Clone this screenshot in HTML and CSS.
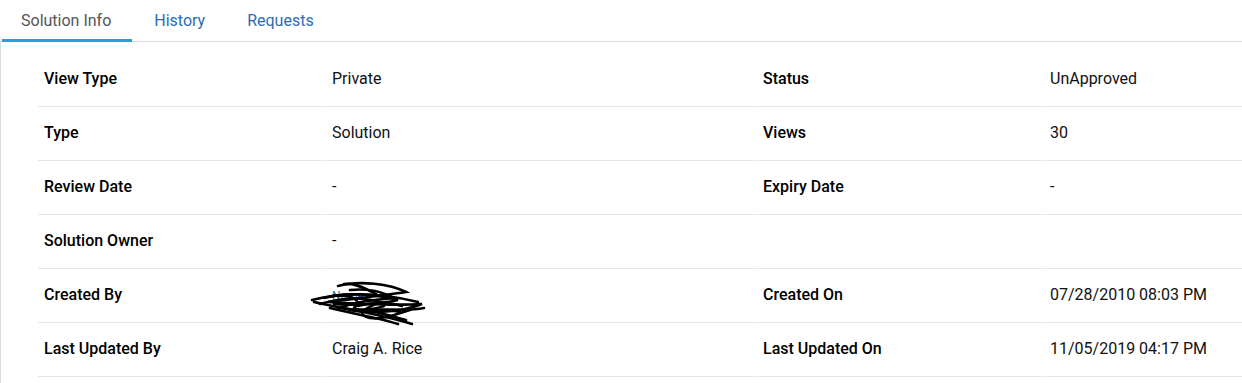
FILE: index.html
```
<!DOCTYPE html>
<html lang="en">
<head>
  <meta charset="UTF-8">
  <title>Solution Info</title>
  <link rel="stylesheet" href="styles.css">
</head>
<body>
  <!-- tabs -->
  <nav class="tabs">
    <a class="tab active">Solution Info</a>
    <a class="tab">History</a>
    <a class="tab">Requests</a>
  </nav>

  <!-- details -->
  <section class="panel">
    <table class="info">
      <colgroup>
        <col class="c1"><col class="c2"><col class="c3"><col class="c4">
      </colgroup>
      <tr>
        <th>View Type</th><td>Private</td>
        <th>Status</th><td>UnApproved</td>
      </tr>
      <tr>
        <th>Type</th><td>Solution</td>
        <th>Views</th><td>30</td>
      </tr>
      <tr>
        <th>Review Date</th><td>-</td>
        <th>Expiry Date</th><td>-</td>
      </tr>
      <tr>
        <th>Solution Owner</th><td>-</td>
        <th></th><td></td>
      </tr>
      <tr>
        <th>Created By</th>
        <td class="redacted">
          <span class="hidden-name">Name</span>
          <svg class="scribble" width="118" height="50" viewBox="0 0 118 50">
            <g fill="none" stroke="#000" stroke-width="2.6" stroke-linecap="round">
              <path d="M2 22 C25 16, 60 12, 108 24"/>
              <path d="M4 24 C30 30, 70 36, 102 46"/>
              <path d="M28 8 C50 2, 80 6, 96 14 C70 18, 40 21, 18 24 C50 26, 82 28, 112 26 C92 34, 62 36, 38 32 C58 30, 80 38, 96 42"/>
              <path d="M40 12 C60 10, 72 14, 84 20 C62 22, 44 24, 30 30 C52 34, 70 30, 90 34"/>
              <path d="M10 26 C30 20, 50 18, 70 24 C56 30, 44 36, 60 40 C74 42, 86 36, 100 32"/>
              <path d="M22 18 C40 16, 52 22, 46 28 C38 32, 56 34, 74 28"/>
              <path d="M34 6 C44 4, 58 12, 66 16 M48 28 C62 24, 80 24, 92 28"/>
              <path d="M14 20 C36 14, 64 16, 88 22 C70 26, 40 28, 24 26"/>
              <path d="M60 32 C76 30, 96 34, 114 30"/>
              <path d="M20 30 C44 36, 70 40, 88 46"/>
            </g>
          </svg>
        </td>
        <th>Created On</th><td>07/28/2010 08:03 PM</td>
      </tr>
      <tr>
        <th>Last Updated By</th><td>Craig A. Rice</td>
        <th>Last Updated On</th><td>11/05/2019 04:17 PM</td>
      </tr>
    </table>
  </section>
</body>
</html>
```
FILE: styles.css
```
body {
  margin: 0;
  font-family: Roboto, "Liberation Sans", sans-serif;
  font-size: 16px;
  color: #111;
  background: #fff;
  overflow: hidden;
}

/* ===== Tabs ===== */
.tabs {
  display: flex;
  height: 41px;
  padding-left: 2px;
  border-bottom: 1px solid #ddd;
}

.tab {
  display: block;
  padding: 0 20px 0 19px;
  margin-left: 3px;
  line-height: 41px;
  color: #2b6cb5;
  cursor: pointer;
}

.tab.active {
  color: #555;
  margin-left: 0;
  padding-right: 21px;
  height: 39px;
  border-bottom: 3px solid #22a0dc;
}

/* ===== Info table ===== */
.panel {
  border-left: 1px solid #ddd;
  padding: 11px 0 0 36px;
  height: 400px;
}

.info {
  border-collapse: separate;
  border-spacing: 1px 0;
  table-layout: fixed;
  width: 1250px;
}

.info .c1 { width: 287px; }
.info .c2 { width: 430px; }
.info .c3 { width: 285px; }

.info th,
.info td {
  height: 51px;
  padding: 0 6px 2px;
  text-align: left;
  vertical-align: middle;
  border-bottom: 1px solid #e5e5e5;
  white-space: nowrap;
}

.info th {
  font-weight: 500;
  color: #000;
}

.info td {
  color: #111;
}

.info td:nth-child(4) {
  padding-left: 7px;
}

/* ===== Redacted name ===== */
.redacted {
  position: relative;
}

.hidden-name {
  color: #2b6cb5;
  font-size: 12px;
}

.scribble {
  position: absolute;
  left: -16px;
  top: 9px;
}
```
